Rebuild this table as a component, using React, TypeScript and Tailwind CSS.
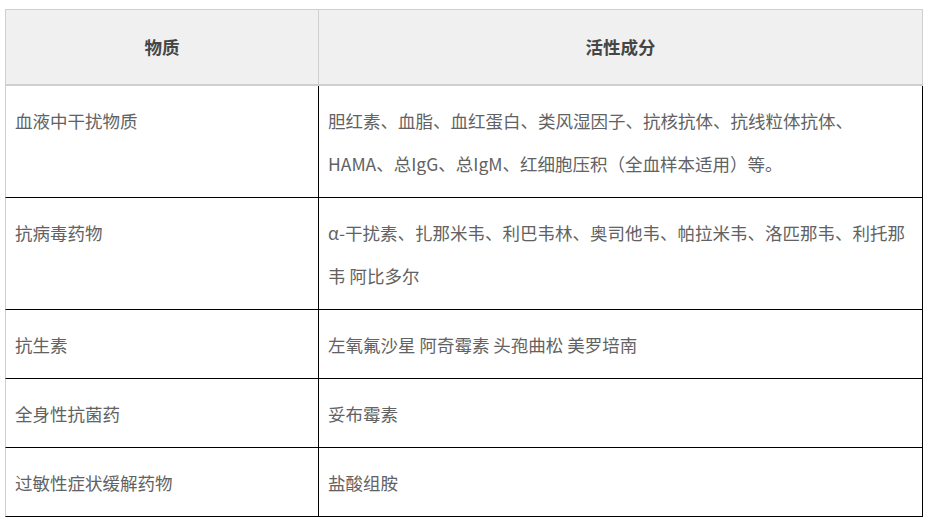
const rows: { name: string; lines: string[] }[] = [
  {
    name: "血液中干扰物质",
    lines: [
      "胆红素、血脂、血红蛋白、类风湿因子、抗核抗体、抗线粒体抗体、",
      "HAMA、总IgG、总IgM、红细胞压积（全血样本适用）等。",
    ],
  },
  {
    name: "抗病毒药物",
    lines: [
      "α-干扰素、扎那米韦、利巴韦林、奥司他韦、帕拉米韦、洛匹那韦、利托那",
      "韦 阿比多尔",
    ],
  },
  { name: "抗生素", lines: ["左氧氟沙星 阿奇霉素 头孢曲松 美罗培南"] },
  { name: "全身性抗菌药", lines: ["妥布霉素"] },
  { name: "过敏性症状缓解药物", lines: ["盐酸组胺"] },
];

export default function App() {
  return (
    <div
      className="min-h-[520px] w-[927px] bg-white pl-[5px] pt-[9px]"
      style={{ fontFamily: '"Noto Sans CJK SC", "Microsoft YaHei", sans-serif' }}
    >
      <table className="w-[918px] table-fixed border-separate border-spacing-0 text-[17.5px] text-[#626262]">
        <colgroup>
          <col className="w-[313px]" />
          <col />
        </colgroup>
        <thead>
          <tr className="bg-[#f0f0f0]">
            <th className="h-[77px] border-y border-l border-[#cfcfcf] border-b-2 text-center font-bold text-[#454545]">
              物质
            </th>
            <th className="h-[77px] border-x border-y border-[#cfcfcf] border-b-2 text-center font-bold text-[#454545]">
              活性成分
            </th>
          </tr>
        </thead>
        <tbody>
          {rows.map((row) => (
            <tr key={row.name}>
              <td className="border-b border-l border-b-black border-l-[#cfcfcf] px-[9px] py-[12.5px] align-top leading-[43px]">
                {row.name}
              </td>
              <td className="border-x border-b border-black px-[9px] py-[12.5px] align-top leading-[43px] whitespace-nowrap">
                {row.lines.map((line, i) => (
                  <div key={i}>{line}</div>
                ))}
              </td>
            </tr>
          ))}
        </tbody>
      </table>
    </div>
  );
}
